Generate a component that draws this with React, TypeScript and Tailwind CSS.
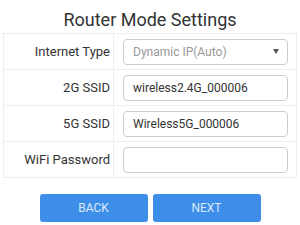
import React from "react";

const rows = [
  { label: "Internet Type", value: "Dynamic IP(Auto)", select: true },
  { label: "2G SSID", value: "wireless2.4G_000006" },
  { label: "5G SSID", value: "Wireless5G_000006" },
  { label: "WiFi Password", value: "" },
];

export default function App() {
  return (
    <div
      className="w-[300px] h-[225px] bg-white overflow-hidden"
      style={{ fontFamily: "Roboto, 'Liberation Sans', sans-serif" }}
    >
      <div className="pt-[9px] h-[33px] text-center text-[18px] leading-[21px] text-[#333]">
        Router Mode Settings
      </div>
      <div className="mx-[3px] w-[294px] border-x border-t border-[#eeeeee]">
        {rows.map((row) => (
          <div key={row.label} className="flex h-9 border-b border-[#eeeeee]">
            <div className="w-[110px] border-r border-[#eeeeee] flex items-center justify-end pr-[3px] text-[13px] text-[#333]">
              {row.label}
            </div>
            <div className="flex-1 flex items-center pl-[9px] pr-[8px]">
              {row.select ? (
                <div className="w-full h-[26px] border border-[#cccccc] rounded-[4px] flex items-center justify-between pl-[9px] pr-[8px] text-[12px] text-[#999]">
                  <span>{row.value}</span>
                  <svg width="6" height="5" viewBox="0 0 6 5">
                    <path d="M0 0 L6 0 L3 5 Z" fill="#555" />
                  </svg>
                </div>
              ) : (
                <div className="w-full h-[26px] border border-[#cccccc] rounded-[4px] flex items-center pl-[9px] text-[12px] text-[#333]">
                  {row.value}
                </div>
              )}
            </div>
          </div>
        ))}
      </div>
      <div className="flex justify-center gap-[5px] mt-4">
        <button className="w-[108px] h-[28px] rounded-[3px] bg-[#3d8ee9] text-[12px] text-[#dbe9fb]">
          BACK
        </button>
        <button className="w-[108px] h-[28px] rounded-[3px] bg-[#3d8ee9] text-[12px] text-[#dbe9fb]">
          NEXT
        </button>
      </div>
    </div>
  );
}
